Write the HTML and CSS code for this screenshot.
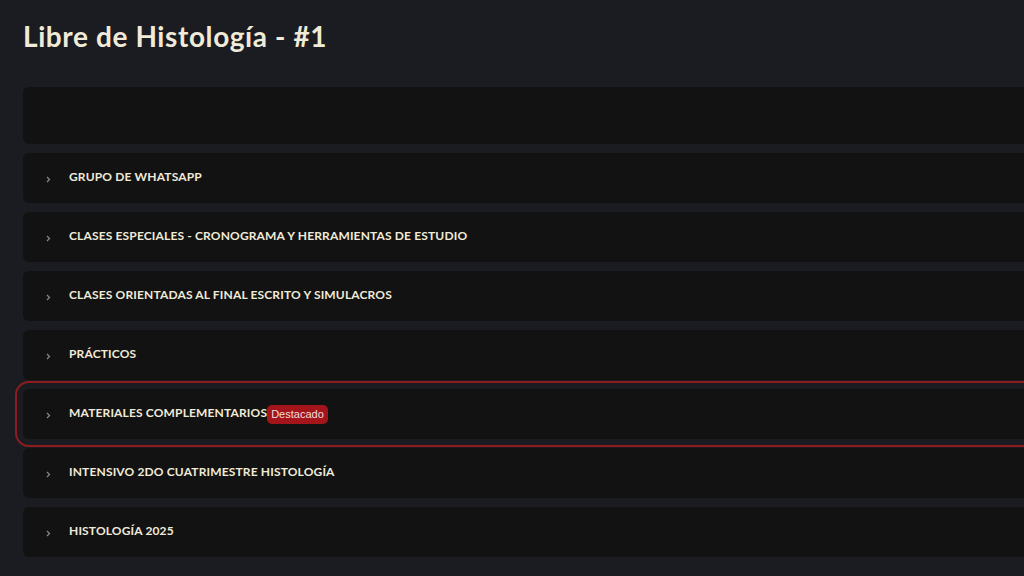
FILE: index.html
```html
<!DOCTYPE html>
<html lang="es">
<head>
<meta charset="utf-8">
<title>Libre de Histología - #1</title>
<link rel="stylesheet" href="styles.css">
</head>
<body>
<main class="page">
  <h1 class="title">Libre de Histología - #1</h1>
  <div class="list">
    <div class="card card-empty"></div>
    <div class="card"><span class="chev"><svg width="5" height="7" viewBox="0 0 5 7"><path d="M1 1l2.5 2.5L1 6" fill="none" stroke="#8a8a8a" stroke-width="1.2"/></svg></span><span class="label">GRUPO DE WHATSAPP</span></div>
    <div class="card"><span class="chev"><svg width="5" height="7" viewBox="0 0 5 7"><path d="M1 1l2.5 2.5L1 6" fill="none" stroke="#8a8a8a" stroke-width="1.2"/></svg></span><span class="label">CLASES ESPECIALES - CRONOGRAMA Y HERRAMIENTAS DE ESTUDIO</span></div>
    <div class="card"><span class="chev"><svg width="5" height="7" viewBox="0 0 5 7"><path d="M1 1l2.5 2.5L1 6" fill="none" stroke="#8a8a8a" stroke-width="1.2"/></svg></span><span class="label">CLASES ORIENTADAS AL FINAL ESCRITO Y SIMULACROS</span></div>
    <div class="card"><span class="chev"><svg width="5" height="7" viewBox="0 0 5 7"><path d="M1 1l2.5 2.5L1 6" fill="none" stroke="#8a8a8a" stroke-width="1.2"/></svg></span><span class="label">PRÁCTICOS</span></div>
    <div class="card card-featured"><span class="chev"><svg width="5" height="7" viewBox="0 0 5 7"><path d="M1 1l2.5 2.5L1 6" fill="none" stroke="#8a8a8a" stroke-width="1.2"/></svg></span><span class="label">MATERIALES COMPLEMENTARIOS</span><span class="badge">Destacado</span></div>
    <div class="card"><span class="chev"><svg width="5" height="7" viewBox="0 0 5 7"><path d="M1 1l2.5 2.5L1 6" fill="none" stroke="#8a8a8a" stroke-width="1.2"/></svg></span><span class="label">INTENSIVO 2DO CUATRIMESTRE HISTOLOGÍA</span></div>
    <div class="card"><span class="chev"><svg width="5" height="7" viewBox="0 0 5 7"><path d="M1 1l2.5 2.5L1 6" fill="none" stroke="#8a8a8a" stroke-width="1.2"/></svg></span><span class="label">HISTOLOGÍA 2025</span></div>
  </div>
</main>
</body>
</html>
```
FILE: styles.css
```css
html, body {
  margin: 0;
  padding: 0;
  background: #1b1c21;
  overflow: hidden;
}
.page {
  padding: 19px 0 0 23px;
  font-family: "Lato", "Noto Sans", sans-serif;
}
.title {
  margin: 0 0 34px 0;
  font-size: 28px;
  line-height: 34px;
  font-weight: 700;
  color: #f0ead8;
  letter-spacing: 0.6px;
}
.list {
  display: flex;
  flex-direction: column;
  gap: 9px;
  margin-right: -20px;
}
.card {
  height: 50px;
  background: #121212;
  border-radius: 6px;
  display: flex;
  align-items: center;
  box-sizing: border-box;
  padding-left: 23px;
}
.card-empty {
  height: 57px;
}
.card-featured {
  outline: 2px solid #8e1c1f;
  outline-offset: 6px;
}
.chev {
  display: flex;
  width: 23px;
  margin-top: 3px;
}
.label {
  font-size: 12px;
  font-weight: 700;
  color: #f0ead8;
  letter-spacing: 0.15px;
  margin-bottom: 4px;
}
.badge {
  font-family: "Liberation Sans", Arial, sans-serif;
  font-size: 11px;
  color: #f3dcdc;
  background: #a3151a;
  border-radius: 5px;
  padding: 3px 4px;
  line-height: 13px;
  margin-top: 1px;
}
```
